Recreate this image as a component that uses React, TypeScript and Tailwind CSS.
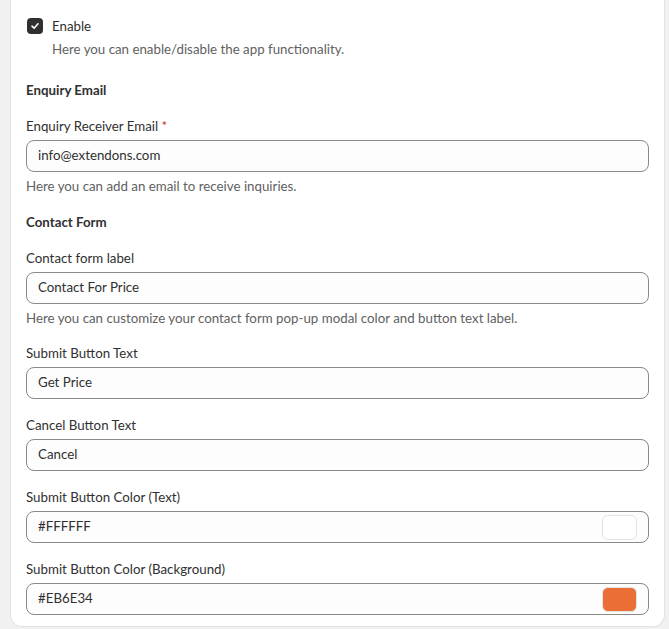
import React from "react";

const FONT = { fontFamily: 'Lato, "Noto Sans", sans-serif' };

function Field({
    label,
    value,
    required,
    help,
    swatch,
    className = "",
}: {
    label: string;
    value: string;
    required?: boolean;
    help?: string;
    swatch?: string;
    className?: string;
}) {
    return (
        <div className={className}>
            <div className="text-[13.3px] leading-5 text-[#303030]">
                {label}
                {required && <span className="text-[#c4401f]"> *</span>}
            </div>
            <div className="mt-1 flex h-8 items-center rounded-lg border border-[#8a8a8a] bg-[#fdfdfd] pl-[11px] pr-[11px]">
                <span className="flex-1 text-[13.3px] text-[#303030]">{value}</span>
                {swatch && (
                    <span
                        className="h-[25px] w-[35px] rounded-md border border-[#e3e3e3]"
                        style={{ backgroundColor: swatch }}
                    />
                )}
            </div>
            {help && <div className="mt-1 text-[13.3px] leading-5 text-[#616161]">{help}</div>}
        </div>
    );
}

export default function App() {
    return (
        <div className="min-h-[629px] bg-[#f1f1f1] pl-[10px] pr-[4px]" style={FONT}>
            <div className="rounded-b-xl border-x border-b border-[#e3e3e3] bg-white px-[15px] pb-[11px] pt-4">
                {/* enable toggle */}
                <div className="flex items-center gap-[9px]">
                    <span className="ml-px flex h-4 w-4 items-center justify-center rounded bg-[#303030]">
                        <svg width="10" height="10" viewBox="0 0 10 10" fill="none">
                            <path d="M2 5.2 4.1 7.2 8 2.8" stroke="white" strokeWidth="1.6" strokeLinecap="round" strokeLinejoin="round" />
                        </svg>
                    </span>
                    <span className="text-[13.3px] leading-5 text-[#303030]">Enable</span>
                </div>
                <div className="ml-[26px] mt-[3px] text-[13.3px] leading-5 text-[#616161]">
                    Here you can enable/disable the app functionality.
                </div>

                <h3 className="mt-[21px] text-[13.3px] font-bold leading-5 text-[#303030]">Enquiry Email</h3>
                <Field
                    className="mt-4"
                    label="Enquiry Receiver Email"
                    required
                    value="info@extendons.com"
                    help="Here you can add an email to receive inquiries."
                />

                <h3 className="mt-4 text-[13.3px] font-bold leading-5 text-[#303030]">Contact Form</h3>
                <Field
                    className="mt-4"
                    label="Contact form label"
                    value="Contact For Price"
                    help="Here you can customize your contact form pop-up modal color and button text label."
                />
                <Field className="mt-[15px]" label="Submit Button Text" value="Get Price" />
                <Field className="mt-4" label="Cancel Button Text" value="Cancel" />
                <Field className="mt-4" label="Submit Button Color (Text)" value="#FFFFFF" swatch="#ffffff" />
                <Field
                    className="mt-4"
                    label="Submit Button Color (Background)"
                    value="#EB6E34"
                    swatch="#eb6e34"
                />
            </div>
        </div>
    );
}
